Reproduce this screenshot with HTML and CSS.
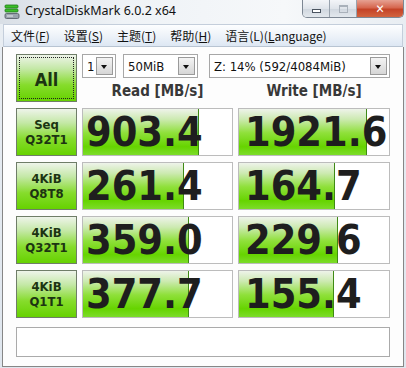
FILE: index.html
```html
<!DOCTYPE html>
<html lang="zh-CN">
<head>
    <meta charset="UTF-8">
    <title>CrystalDiskMark 6.0.2 x64</title>
    <link rel="stylesheet" href="styles.css">
</head>
<body>
    <div class="titlebar">
        <svg class="app-icon" width="16" height="16" viewBox="0 0 16 16">
            <rect x="1" y="1" width="13" height="3" rx="1" fill="#3cbf2a" stroke="#1d7a16" stroke-width="0.8"/>
            <rect x="1" y="5" width="13" height="3" rx="1" fill="#3cbf2a" stroke="#1d7a16" stroke-width="0.8"/>
            <rect x="1" y="9.5" width="14" height="5" rx="1.5" fill="#9aa3ad" stroke="#4e5660" stroke-width="0.8"/>
            <rect x="3" y="11.5" width="6" height="1" fill="#e6eaee"/>
        </svg>
        <span class="title">CrystalDiskMark 6.0.2 x64</span>
        <div class="controls">
            <div class="ctl ctl-min"><span class="min-glyph"></span></div>
            <div class="ctl ctl-max"><span class="max-glyph"></span></div>
            <div class="ctl ctl-close">&#x2715;</div>
        </div>
    </div>

    <div class="menubar">
        <span class="menu-item">文件(<u>F</u>)</span>
        <span class="menu-item">设置(<u>S</u>)</span>
        <span class="menu-item">主题(<u>T</u>)</span>
        <span class="menu-item">帮助(<u>H</u>)</span>
        <span class="menu-item">语言(L)(<u>L</u>anguage)</span>
    </div>

    <div class="client">
        <div class="top">
            <div class="btn-all"><span class="focus">All</span></div>
            <div class="top-right">
                <div class="selects">
                    <div class="combo combo-count"><span>1</span><i class="drop"></i></div>
                    <div class="combo combo-size"><span>50MiB</span><i class="drop"></i></div>
                    <div class="combo combo-drive"><span>Z: 14% (592/4084MiB)</span><i class="drop"></i></div>
                </div>
                <div class="heads">
                    <div class="head">Read [MB/s]</div>
                    <div class="head">Write [MB/s]</div>
                </div>
            </div>
        </div>

        <div class="rows">
            <div class="label">Seq<br>Q32T1</div>
            <div class="meter"><div class="fill" style="width: 78%"></div><span class="value">903.4</span></div>
            <div class="meter meter-write"><div class="fill" style="width: 85%"></div><span class="value">1921.6</span></div>

            <div class="label">4KiB<br>Q8T8</div>
            <div class="meter"><div class="fill" style="width: 67.5%"></div><span class="value">261.4</span></div>
            <div class="meter meter-write"><div class="fill" style="width: 64%"></div><span class="value">164.7</span></div>

            <div class="label">4KiB<br>Q32T1</div>
            <div class="meter"><div class="fill" style="width: 71%"></div><span class="value">359.0</span></div>
            <div class="meter meter-write"><div class="fill" style="width: 66%"></div><span class="value">229.6</span></div>

            <div class="label">4KiB<br>Q1T1</div>
            <div class="meter"><div class="fill" style="width: 71%"></div><span class="value">377.7</span></div>
            <div class="meter meter-write"><div class="fill" style="width: 63%"></div><span class="value">155.4</span></div>
        </div>

        <div class="comment"></div>
    </div>
</body>
</html>
```

FILE: styles.css
```css
* {
    box-sizing: border-box;
    margin: 0;
    padding: 0;
}

body {
    width: 406px;
    height: 368px;
    overflow: hidden;
    background: linear-gradient(to bottom, #e9eef3, #dfe6ee);
    font-family: 'DejaVu Sans Condensed', 'DejaVu Sans', sans-serif;
}

/* title bar */
.titlebar {
    height: 24px;
    display: flex;
    align-items: flex-start;
    background: linear-gradient(to right, #d9dfe6 0%, #eef2f6 30%, #f6f8fa 70%, #e8edf2 100%);
}

.app-icon {
    margin: 4px 0 0 4px;
}

.title {
    margin: 2px 0 0 5px;
    font-family: 'Noto Sans', 'DejaVu Sans', sans-serif;
    font-size: 12.5px;
    color: #111;
}

.controls {
    margin-left: auto;
    margin-right: 2px;
    display: flex;
    height: 18px;
    border: 1px solid #7d8793;
    border-top: none;
    border-radius: 0 0 5px 5px;
    overflow: hidden;
}

.ctl {
    display: flex;
    align-items: center;
    justify-content: center;
    height: 100%;
}

.ctl-min,
.ctl-max {
    width: 27px;
    background: linear-gradient(to bottom, #f3f5f8 0%, #dfe4ea 50%, #cfd6de 51%, #e3e8ed 100%);
    border-right: 1px solid #98a2ad;
}

.min-glyph {
    display: block;
    width: 9px;
    height: 4px;
    margin-top: 4px;
    border: 1px solid #4a5460;
    background: #fff;
}

.max-glyph {
    display: block;
    width: 9px;
    height: 8px;
    border: 1px solid #a9b1ba;
    border-top-width: 2px;
}

.ctl-close {
    width: 46px;
    background: linear-gradient(to bottom, #e6a192 0%, #d6674f 45%, #c44327 55%, #d2643f 100%);
    color: #fff;
    font-size: 12px;
    font-weight: bold;
}

/* menu */
.menubar {
    height: 23px;
    margin: 0 3px 0 3px;
    display: flex;
    align-items: center;
    border: 1px solid #c4cedb;
    border-bottom: 1px solid #b8c4d2;
    background: linear-gradient(to bottom, #fdfeff 0%, #eef3f9 50%, #dde7f3 100%);
}

.menu-item {
    padding: 0 7px;
    font-family: 'Noto Sans CJK SC', 'DejaVu Sans', sans-serif;
    font-size: 12px;
    color: #111;
}

/* client area */
.client {
    height: 320px;
    margin: 0 2px;
    padding: 7px 0 0 13px;
    background: #fdfdfd;
    border: 1px solid #868686;
    border-top: none;
}

.top {
    display: flex;
    gap: 5px;
}

.btn-all,
.label {
    border: 1px solid #6f7d68;
    background: linear-gradient(to bottom, #eef4ea 0%, #c4e8a6 30%, #86dc2c 65%, #66d200 100%);
    color: #1c3412;
    font-weight: bold;
    text-align: center;
}

.btn-all {
    width: 61px;
    height: 48px;
    padding: 2px;
    font-size: 18px;
}

.focus {
    display: flex;
    align-items: center;
    justify-content: center;
    height: 100%;
    border: 1px dotted #222;
    padding-top: 2px;
}

.top-right {
    display: flex;
    flex-direction: column;
}

.selects {
    display: flex;
    height: 24px;
}

.combo {
    display: flex;
    align-items: center;
    justify-content: space-between;
    height: 24px;
    padding: 2px 2px 2px 4px;
    border: 1px solid #a7a7a7;
    background: #fff;
    font-size: 13px;
    color: #111;
}

.combo-count {
    width: 34px;
}

.combo-size {
    width: 75px;
    margin-left: 7px;
}

.combo-drive {
    width: 181px;
    margin-left: 11px;
}

.drop {
    width: 17px;
    height: 18px;
    border: 1px solid #9a9a9a;
    background: linear-gradient(to bottom, #f4f4f4, #d6d6d6);
    position: relative;
}

.drop::after {
    content: "";
    position: absolute;
    left: 4px;
    top: 7px;
    border-left: 3.5px solid transparent;
    border-right: 3.5px solid transparent;
    border-top: 4px solid #111;
}

.heads {
    display: flex;
    gap: 5px;
    height: 24px;
    align-items: center;
}

.head {
    width: 151px;
    text-align: center;
    font-size: 15px;
    font-weight: bold;
    color: #383838;
    padding-top: 2px;
}

.head + .head {
    width: 152px;
}

/* result rows */
.rows {
    display: grid;
    grid-template-columns: 61px 151px 152px;
    grid-auto-rows: 48px;
    column-gap: 5px;
    row-gap: 6px;
    margin-top: 6px;
}

.label {
    display: flex;
    align-items: center;
    justify-content: center;
    font-size: 13px;
    line-height: 15px;
}

.meter {
    position: relative;
    border: 1px solid #bcbcbc;
    background: #fff;
    overflow: hidden;
}

.fill {
    position: absolute;
    left: 0;
    top: 0;
    bottom: 0;
    background: linear-gradient(to bottom, #eef3ea 0%, #cdeab2 22%, #8fe03a 52%, #66d400 82%, #7cdc2a 100%);
    border-right: 1px solid #3f8a14;
}

.value {
    position: relative;
    display: block;
    padding-left: 3px;
    font-size: 41px;
    font-weight: bold;
    line-height: 46px;
    color: #1e1e1e;
}

.meter-write .value {
    padding-left: 6px;
}

.comment {
    width: 374px;
    height: 30px;
    margin-top: 9px;
    border: 1px solid #aaa;
    background: #fff;
}
```
